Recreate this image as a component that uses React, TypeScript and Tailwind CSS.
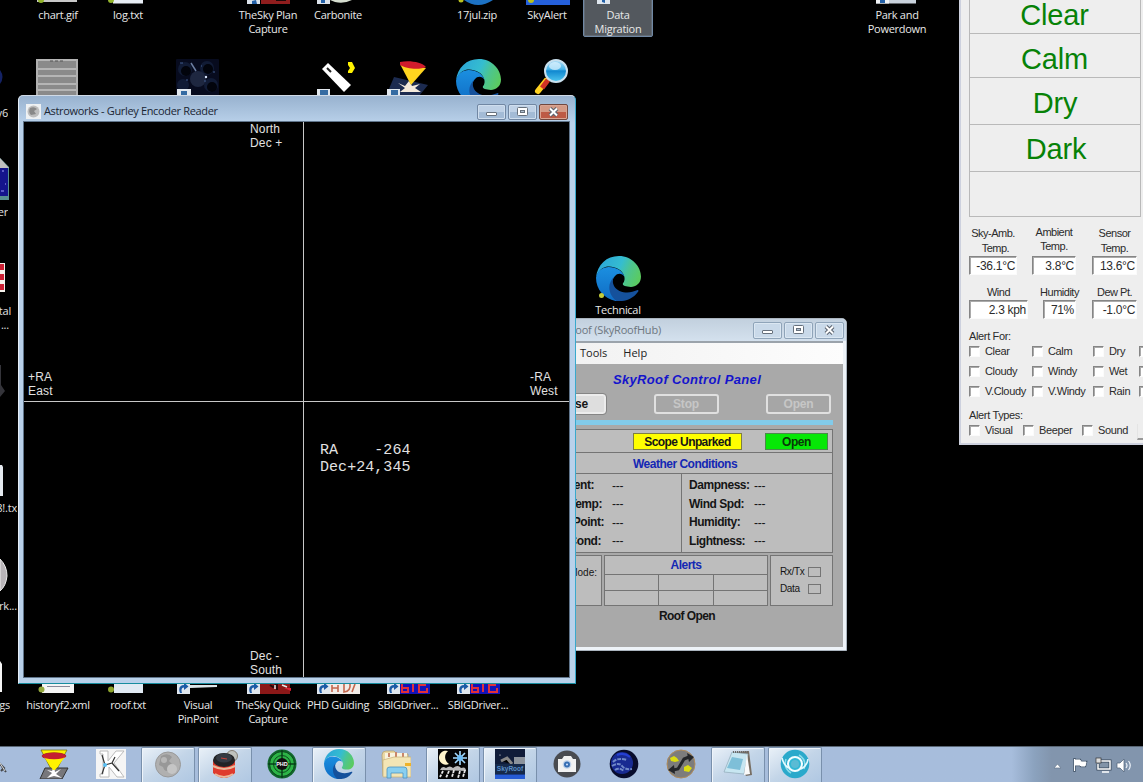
import React from "react";

const segoe = "font-['Open_Sans','Noto_Sans',sans-serif]";
const arial = "font-['Liberation_Sans',Arial,sans-serif]";

function Edge({ size, id }: { size: number; id: string }) {
  return (
    <svg width={size} height={size} viewBox="0 0 134 134">
      <defs>
        <linearGradient id={id + "a"} x1="0" x2="1" y1="0.3" y2="0.6">
          <stop offset="0" stopColor="#2ba5d8" />
          <stop offset="0.5" stopColor="#35bdd0" />
          <stop offset="0.72" stopColor="#4cc590" />
          <stop offset="1" stopColor="#5bcb60" />
        </linearGradient>
        <linearGradient id={id + "b"} x1="0" x2="0" y1="0" y2="1">
          <stop offset="0" stopColor="#1b8fe0" />
          <stop offset="1" stopColor="#0f6cc4" />
        </linearGradient>
      </defs>
      <path fill={`url(#${id}a)`} d="M0 65C4 25 32 0 68 0C108 0 134 32 134 62C134 82 118 92 104 92C90 92 78 88 80 82C86 74 86 66 84 60C78 38 50 28 30 32C14 36 4 50 0 65Z" />
      <path fill={`url(#${id}b)`} d="M0 65C4 44 20 33 38 33C62 33 80 46 85 62C78 50 64 50 56 60C40 76 50 110 78 124C76 134 60 134 58 134C25 128 0 100 0 65Z" />
      <path fill="#15519c" d="M56 60C44 70 50 96 70 104C90 112 108 108 122 102C127 100 128 104 124 108C108 130 84 136 62 134C40 120 28 84 56 60Z" />
    </svg>
  );
}

function Shortcut({ className = "" }: { className?: string }) {
  return (
    <svg className={className} width="13" height="13" viewBox="0 0 13 13">
      <rect width="13" height="13" fill="#dfe6ee" />
      <path d="M3 12C1 7 3 4 7 4V1.500L11.500 5.500L7 9V6.500C4.500 6.500 4 9 5 12Z" fill="#1c5aa6" />
    </svg>
  );
}

function Label({ className, children }: { className: string; children: React.ReactNode }) {
  return (
    <div className={`absolute w-[90px] text-center text-[11px] leading-[14px] tracking-[-0.28px] whitespace-pre text-[#e8e8e8] ${segoe} ${className}`}>
      {children}
    </div>
  );
}

function CutLabel({ className, children }: { className: string; children: React.ReactNode }) {
  return (
    <div className={`absolute left-0 flex justify-end overflow-hidden text-[11px] leading-[14px] tracking-[-0.2px] whitespace-pre text-[#e0e0e0] ${segoe} ${className}`}>
      <span>{children}</span>
    </div>
  );
}

function DesktopIcons() {
  return (
    <>
      <svg className="absolute left-0 top-0" width="950" height="12" viewBox="0 0 950 12">
        <rect x="37" width="40" height="2" fill="#c8c8c8" /><circle cx="41" cy="0" r="3" fill="#93b52c" />
        <rect x="113" width="30" height="3.500" fill="#e8eef5" /><circle cx="111" cy="0" r="3" fill="#93b52c" />
        <rect x="247" width="13" height="4" fill="#dbe2ea" /><path d="M252 4V1L256 0L257 4Z" fill="#2461a8" />
        <rect x="261" width="29" height="4" fill="#8f1d1d" /><path d="M276 0H286V1H276Z" fill="#1c0808" />
        <rect x="317" width="13" height="4" fill="#dbe2ea" /><path d="M321 3V0H325V3Z" fill="#2461a8" />
        <path d="M330 0H352Q344 4 335 2Z" fill="#d5ddcf" />
        <path d="M464 0H493Q478 10 464 0Z" fill="#1d72c4" /><circle cx="461" cy="0" r="2.500" fill="#b9c11f" />
        <rect x="526" width="44" height="5" fill="#2560dc" /><circle cx="531" cy="0" r="3" fill="#b9c11f" />
        <rect x="876" width="40" height="3.500" fill="#c9d2dc" /><rect x="876" width="13" height="3.500" fill="#f0f3f6" /><path d="M880 3V0H885V3Z" fill="#2461a8" />
      </svg>
      <Label className="left-[13px] top-[8px]">chart.gif</Label>
      <Label className="left-[83px] top-[8px]">log.txt</Label>
      <Label className="left-[223px] top-[8px]">{"TheSky Plan\nCapture"}</Label>
      <Label className="left-[293px] top-[8px]">Carbonite</Label>
      <Label className="left-[432px] top-[8px]">17jul.zip</Label>
      <Label className="left-[502px] top-[8px]">SkyAlert</Label>
      <div className="absolute left-[583px] top-[-4px] h-[41px] w-[70px] rounded-[2px] border border-[#7088a4] bg-[#53585e] shadow-[inset_0_0_0_1px_#626a73]" />
      <svg className="absolute left-[597px] top-0" width="13" height="4"><rect width="13" height="4" fill="#dfe6ee" /><path d="M5 2V0H8V3Z" fill="#2461a8" /></svg>
      <Label className="left-[573px] top-[8px]">{"Data\nMigration"}</Label>
      <Label className="left-[852px] top-[8px]">{"Park and\nPowerdown"}</Label>

      <svg className="absolute left-[36px] top-[59px]" width="42" height="37" viewBox="0 0 42 37">
        <rect width="42" height="37" fill="#8a8a8a" />
        <path d="M0 1H42M0 10H42M0 17H42M0 25H42M0 31H42" stroke="#c4c4c4" strokeWidth="1.300" />
        <path d="M1 0V37M41 0V37" stroke="#b0b0b0" strokeWidth="2" />
        <path d="M14 2H27" stroke="#555" strokeDasharray="3 2" />
      </svg>
      <svg className="absolute left-[176px] top-[59px]" width="43" height="37" viewBox="0 0 43 37">
        <rect width="43" height="37" rx="1" fill="#070b1e" />
        <g fill="#111b35"><circle cx="9" cy="10" r="7" /><circle cx="31" cy="9" r="7" /><circle cx="7" cy="26" r="6" /><circle cx="35" cy="26" r="7" /></g>
        <g fill="#02040c"><circle cx="10" cy="12" r="5" /><circle cx="32" cy="10" r="5" /><circle cx="36" cy="28" r="5" /></g>
        <circle cx="22" cy="20" r="8" fill="#1e2740" />
        <path d="M15 4L20 12" stroke="#6c7fa2" strokeWidth="1.500" />
        <circle cx="30" cy="18" r="1.200" fill="#dce8ff" />
        <path d="M4 4H7M25 7H26M37 13H39M10 21H12M28 22H30" stroke="#425f91" />
        <rect x="1" y="30" width="14" height="7" fill="#e2e8ee" /><rect x="5" y="32" width="6" height="5" fill="#356ba2" />
      </svg>
      <svg className="absolute left-[316px] top-[59px]" width="42" height="37" viewBox="0 0 42 37">
        <path d="M6 10L12 4L35 26L28 33Z" fill="#fff" /><path d="M11 9L15 13" stroke="#222" strokeWidth="2" />
        <path d="M32 3H36L38 7L39 9L36 14H32V12L34 9L32 6Z" fill="#fff200" />
        <rect x="1" y="30" width="13" height="7" fill="#e2e8ee" /><rect x="4" y="31" width="8" height="5" fill="#356ba2" />
      </svg>
      <svg className="absolute left-[386px] top-[59px]" width="42" height="37" viewBox="0 0 42 37">
        <path d="M8 18L42 26L33 37H0Z" fill="#1c2b50" />
        <path d="M12 24L19 27L23 22L26 27L34 25L29 29L35 33H14L19 29Z" fill="#f4eadc" />
        <path d="M14 5L40 9L25 26Z" fill="#ffd51f" />
        <path d="M14 3C23 1 36 3 40 8C34 11 20 10 14 6Z" fill="#d11c2c" />
        <rect x="1" y="30" width="13" height="7" fill="#e2e8ee" /><rect x="5" y="31" width="7" height="5" fill="#356ba2" />
      </svg>
      <div className="absolute left-[456px] top-[59px]"><Edge size={45} id="d1" /></div>
      <svg className="absolute left-[532px] top-[58px]" width="40" height="38" viewBox="0 0 40 38">
        <defs><linearGradient id="lens" x2="0" y2="1"><stop stopColor="#b0e0f8" /><stop offset=".42" stopColor="#49b4e8" /><stop offset=".5" stopColor="#1188d0" /><stop offset="1" stopColor="#50c8f0" /></linearGradient></defs>
        <path d="M14 23L6 33" stroke="#ffd220" strokeWidth="6" strokeLinecap="round" /><path d="M16 22L10 30" stroke="#cf3326" strokeWidth="5" />
        <circle cx="24" cy="13" r="11" fill="url(#lens)" stroke="#c9e0ee" strokeWidth="2" />
        <ellipse cx="23" cy="8" rx="6" ry="4" fill="#dff4ff" opacity=".7" />
      </svg>
      <div className="absolute left-[596px] top-[256px]"><Edge size={45} id="d2" /></div>
      <div className="absolute left-[599px] top-[293px] size-[5px] rounded-full bg-[#c2cc3c]" />
      <Label className="left-[573px] top-[303px]">Technical</Label>

      <svg className="absolute left-0 top-[60px]" width="14" height="640" viewBox="0 60 14 640">
        <path d="M0 70Q5 77 0 84Z" fill="#142264" />
        <path d="M0 158L9 167V200H0Z" fill="#579090" /><path d="M0 168H8V196H0Z" fill="#14148c" /><path d="M0 158L9 168H0Z" fill="#c0c0c0" />
        <path d="M2 171H4M5 184H6M1 191H4" stroke="#a0a0ff" />
        <rect y="263" width="5" height="29" fill="#f5f2ec" /><path d="M0 264H4V270H0ZM0 274H4V280H0ZM0 284H4V290H0Z" fill="#cc2034" />
        <path d="M0 365L1 365V385L5 391L0 397Z" fill="#34343a" />
        <path d="M0 465H2L3 467V496H0Z" fill="#e4e9ef" />
        <path d="M0 559Q7 566 7 576Q6 586 0 591Z" fill="#b8b4b8" stroke="#eee" />
        <path d="M0 661L2 664V692H0Z" fill="#f5f5f5" />
      </svg>
      <CutLabel className="top-[106px] w-[8px]">y6</CutLabel>
      <CutLabel className="top-[205px] w-[8px]">er</CutLabel>
      <CutLabel className="top-[304px] w-[11px]">tal</CutLabel>
      <CutLabel className="top-[318px] w-[9px]">...</CutLabel>
      <CutLabel className="top-[501px] w-[17px]">8!.tx</CutLabel>
      <CutLabel className="top-[599px] w-[17px]">rk...</CutLabel>
      <CutLabel className="top-[698px] w-[10px]">gs</CutLabel>

      <svg className="absolute left-0 top-[682px]" width="520" height="13" viewBox="0 682 520 13">
        <rect x="42" y="684" width="32" height="9" fill="#f4f4f4" /><path d="M47 686.500H70" stroke="#889" /><circle cx="41.500" cy="689.500" r="3" fill="#93a83c" />
        <rect x="114" y="684" width="29" height="9" fill="#e1eaf3" /><circle cx="111" cy="689.500" r="3" fill="#8ca42c" />
        <path d="M190 685H217V687L190 688Z" fill="#dde6ea" />
        <rect x="260" y="684" width="30" height="10" fill="#8c1818" /><path d="M270 685L273 687L277 684V690" fill="none" stroke="#2a0a0a" strokeWidth="2" /><path d="M275 685V689M287 687L282 685" stroke="#e8e8e8" strokeWidth="1.500" /><path d="M284 688H291V691Z" fill="#e11f35" />
        <rect x="329" y="684" width="31" height="10" fill="#f2ece8" /><path d="M332 685V692M338 685V692M332 688H338M344 684V692Q351 691 350 684M355 684L352 692" stroke="#c3674e" strokeWidth="1.600" fill="none" />
        {[400, 470].map((x) => (
          <g key={x}>
            <rect x={x} y="684" width="30" height="10" fill="#1512b8" />
            <path d={`M${x + 2} 684V692H${x + 8}V688H${x + 2}M${x + 13} 684V692M${x + 26} 685H${x + 19}V692H${x + 27}V688`} fill="none" stroke="#e0303a" strokeWidth="2" />
          </g>
        ))}
      </svg>
      <div className="absolute left-[176px] top-[684px] h-[10px] w-[314px] overflow-hidden">
        <Shortcut className="absolute left-px top-[-3px]" />
        <Shortcut className="absolute left-[71px] top-[-3px]" />
        <Shortcut className="absolute left-[141px] top-[-3px]" />
        <Shortcut className="absolute left-[211px] top-[-3px]" />
        <Shortcut className="absolute left-[281px] top-[-3px]" />
      </div>
      <Label className="left-[13px] top-[698px]">historyf2.xml</Label>
      <Label className="left-[83px] top-[698px]">roof.txt</Label>
      <Label className="left-[153px] top-[698px]">{"Visual\nPinPoint"}</Label>
      <Label className="left-[223px] top-[698px]">{"TheSky Quick\nCapture"}</Label>
      <Label className="left-[293px] top-[698px]">PHD Guiding</Label>
      <Label className="left-[363px] top-[698px]">SBIGDriver...</Label>
      <Label className="left-[433px] top-[698px]">SBIGDriver...</Label>
    </>
  );
}

function Glyph({ kind }: { kind: "min" | "max" | "close" }) {
  return (
    <svg width="13" height="10" viewBox="0 0 13 10">
      {kind === "min" && <rect x="1.500" y="5.500" width="10" height="3" rx=".5" fill="#fff" stroke="#66707c" />}
      {kind === "max" && <><rect x="1.500" y=".5" width="10" height="8" rx="1" fill="#fff" stroke="#66707c" /><rect x="4.500" y="3.500" width="4" height="2" fill="#aebfd0" stroke="#66707c" /></>}
      {kind === "close" && <><path d="M3 1.500L10 8.500M10 1.500L3 8.500" stroke="#59626e" strokeWidth="4" /><path d="M3 1.500L10 8.500M10 1.500L3 8.500" stroke="#fff" strokeWidth="2" /></>}
    </svg>
  );
}

function EncoderWindow() {
  const cap = "flex h-[16px] w-[29px] items-center justify-center rounded-[2px] border";
  const blue = "border-[#7187a3] bg-linear-to-b from-[#bfd1e6] from-50% to-[#a3bbd6] to-50% shadow-[inset_0_0_0_1px_#cfdeee]";
  return (
    <section className="absolute left-[18px] top-[95px] z-20 flex h-[589px] w-[558px] flex-col rounded-t-[5px] border border-t-[#d0dae6] border-r-[#39a9cc] border-b-[#178d9f] border-l-[#e6eef7] bg-[#b9d1ea] bg-linear-to-b from-[#98b2cf] to-[#b9d1ea] to-[27px] pr-[5px] pb-[5px] pl-[4px]">
      <header className="flex h-[25px] shrink-0 items-center pt-[6px]">
        <div className="ml-[3px] flex size-[15px] items-center justify-center bg-[#eef1f3]">
          <svg width="13" height="13" viewBox="0 0 13 13"><circle cx="6.500" cy="6.500" r="6" fill="#bdbdbd" /><path d="M3 3Q7 1 10 4L7 6L9 9L4 10Q1 7 3 3" fill="#888" /></svg>
        </div>
        <h1 className={`ml-[3px] text-[11px] tracking-[-0.34px] whitespace-nowrap text-[#1a2533] ${segoe}`}>Astroworks - Gurley Encoder Reader</h1>
        <div className="mr-[2px] ml-auto flex gap-[2px]">
          <div className={`${cap} ${blue}`}><Glyph kind="min" /></div>
          <div className={`${cap} ${blue}`}><Glyph kind="max" /></div>
          <div className={`${cap} border-[#71483f] bg-linear-to-b from-[#d39a86] from-50% to-[#bd5a45] to-50% shadow-[inset_0_0_0_1px_#d9a492]`}><Glyph kind="close" /></div>
        </div>
      </header>
      <div className={`grid min-h-0 flex-1 grid-cols-[280px_1fr] grid-rows-[280px_1fr] border border-[#60758b] bg-black text-[12px] leading-[14px] tracking-[0.15px] text-[#e2e2e2] ${arial}`}>
        <div className="flex flex-col justify-between border-r border-b border-[#c8c8c8]">
          <p className="w-[53px] self-end">North<br />Dec +</p>
          <p className="ml-[4px] pb-[3px]">+RA<br />East</p>
        </div>
        <div className="flex items-end justify-end border-b border-[#c8c8c8] pb-[3px]">
          <p className="w-[39px]">-RA<br />West</p>
        </div>
        <div className="flex items-end justify-end border-r border-[#c8c8c8]">
          <p className="w-[53px]">Dec -<br />South</p>
        </div>
        <pre className="pt-[40px] pl-[16px] font-['Liberation_Mono',monospace] text-[15px] leading-[17px] tracking-[0.05px]">{"RA    -264\nDec+24,345"}</pre>
      </div>
    </section>
  );
}

function Reading({ name, value, className }: { name: string; value: string; className: string }) {
  return (
    <div className="flex h-[18.500px] items-center">
      <span className={className}>{name}</span>
      <span className="pt-px text-[12px] font-normal tracking-[-0.2px]">{value}</span>
    </div>
  );
}

function RoofWindow() {
  const cap = "flex h-[17px] w-[29px] items-center justify-center rounded-[2px] border border-[#8fa4b9] bg-[#c9d9e9] shadow-[inset_0_0_0_1px_#dbe7f2]";
  const btn = "flex h-[20px] items-center justify-center rounded-[3px] border-2 text-[12px] tracking-[-0.2px]";
  return (
    <section className="absolute left-[531px] top-[318px] z-10 flex h-[333px] w-[316px] flex-col rounded-t-[5px] border border-[#aab4be] bg-[#eef3f8] px-[3px] pb-[3px]">
      <header className="-mx-[3px] flex h-[22px] shrink-0 items-center rounded-t-[4px] bg-linear-to-b from-[#c2d0de] to-[#d4e1ee]">
        <h2 className={`w-[129px] text-right text-[11px] tracking-[-0.2px] whitespace-nowrap text-[#6c7680] ${segoe}`}>SkyRoof (SkyRoofHub)</h2>
        <div className="mr-[2px] ml-auto flex gap-[2px]">
          <div className={cap}><Glyph kind="min" /></div>
          <div className={cap}><Glyph kind="max" /></div>
          <div className={cap}><Glyph kind="close" /></div>
        </div>
      </header>
      <nav className={`flex h-[23px] shrink-0 items-center gap-[16px] border-t-2 border-[#9ba3ab] bg-linear-to-r from-[#f0f0f0] to-[#fdfdfd] pl-[45px] text-[11px] text-[#222] ${segoe}`}>
        <span>Tools</span><span>Help</span>
      </nav>
      <div className={`flex flex-1 flex-col bg-[#a9a9a9] pr-[10px] pl-[6px] font-bold text-[#151515] ${arial}`}>
        <h3 className="mt-[7px] h-[17px] text-center text-[13px] leading-[17px] tracking-[0.35px] text-[#1414cc] italic">SkyRoof Control Panel</h3>
        <div className="mt-[6px] flex justify-between pr-[2px]">
          <div className={`${btn} w-[65px] justify-end border-[#ececec] bg-[#dedede] pr-[16px] outline outline-[#858585]`}>Close</div>
          <div className={`${btn} w-[65px] border-[#e0e0e0] bg-[#a6a6a6] text-[#c6c6c6]`}>Stop</div>
          <div className={`${btn} w-[65px] border-[#e0e0e0] bg-[#a6a6a6] text-[#c6c6c6]`}>Open</div>
        </div>
        <div className="mt-[6px] h-[5px] bg-[#82cbea]" />
        <div className="mt-[4px] border border-[#747474] bg-[#bdbdbd] text-[12px] tracking-[-0.6px]">
          <div className="flex h-[23px] items-center justify-end gap-[23px] border-b border-[#747474] pt-px pr-[4px]">
            <div className="flex h-[17px] w-[109px] items-center justify-center border border-[#7f7f40] bg-[#ffff00]">Scope Unparked</div>
            <div className="flex h-[17px] w-[63px] items-center justify-center border border-[#4a8a4a] bg-[#06e806] tracking-[-0.4px] text-[#083808]">Open</div>
          </div>
          <div className="flex h-[21px] items-center justify-center border-b border-[#747474] pt-px pr-[4px] tracking-[-0.5px] text-[#1428b4]">Weather Conditions</div>
          <div className="flex h-[78px] tracking-[-0.45px]">
            <div className="w-[140px] border-r border-[#747474] pt-[2px]">
              <Reading className="mr-[18px] w-[52px] text-right" name="Ambient:" value="---" />
              <Reading className="mr-[10px] w-[60px] text-right" name="Sky Temp:" value="---" />
              <Reading className="mr-[8px] w-[62px] text-right" name="Dew Point:" value="---" />
              <Reading className="mr-[11px] w-[59px] text-right" name="Sky Cond:" value="---" />
            </div>
            <div className="pt-[2px] pl-[7px]">
              <Reading className="w-[65px]" name="Dampness:" value="---" />
              <Reading className="w-[65px]" name="Wind Spd:" value="---" />
              <Reading className="w-[65px]" name="Humidity:" value="---" />
              <Reading className="w-[65px]" name="Lightness:" value="---" />
            </div>
          </div>
        </div>
        <div className="mt-[2px] flex h-[51px] gap-[2px] text-[10px] font-normal">
          <div className="w-[61px] border border-[#747474] bg-[#bdbdbd] pt-[9px] pr-[4px] text-right">Mode:</div>
          <div className="flex flex-1 flex-col border border-[#747474] bg-[#bdbdbd]">
            <div className="h-[18px] text-center text-[12px] leading-[19px] font-bold tracking-[-0.5px] text-[#1428b4]">Alerts</div>
            <div className="grid flex-1 grid-cols-3 grid-rows-2 gap-px bg-[#747474] pt-px">
              {[0, 1, 2, 3, 4, 5].map((n) => <div key={n} className="bg-[#bdbdbd]" />)}
            </div>
          </div>
          <div className="flex w-[63px] flex-col gap-[5px] border border-[#747474] bg-[#bdbdbd] pt-[10px] pr-[11px] pl-[9px] text-[10px] leading-[12px] tracking-[-0.35px]">
            <div className="flex items-center justify-between">Rx/Tx<i className="h-[10px] w-[13px] border border-[#747474]" /></div>
            <div className="flex items-center justify-between">Data<i className="h-[10px] w-[13px] border border-[#747474]" /></div>
          </div>
        </div>
        <p className="mt-[2px] text-center text-[12px] leading-[16px] tracking-[-0.6px]">Roof Open</p>
      </div>
    </section>
  );
}

const sunken = "border border-t-[#858585] border-l-[#858585] border-r-[#fbfbfb] border-b-[#fbfbfb] shadow-[inset_1px_1px_0_#aaa] bg-white";

function Field({ label, value, className, lift = false }: { label: string; value: string; className: string; lift?: boolean }) {
  return (
    <div className="flex flex-col justify-end whitespace-pre">
      <span className={`self-center text-center tracking-[-0.5px] ${lift ? "leading-[14px] pb-[3px]" : "leading-[15px]"}`}>{label}</span>
      <span className={`flex h-[19px] items-center justify-end pr-px text-[12px] tracking-[-0.3px] ${sunken} ${className}`}>{value}</span>
    </div>
  );
}

function Check({ label, className = "" }: { label: string; className?: string }) {
  return (
    <div className={`flex shrink-0 items-center gap-[5px] overflow-visible whitespace-nowrap ${className}`}>
      <i className={`size-[11px] shrink-0 ${sunken}`} />{label}
    </div>
  );
}

function WeatherWindow() {
  const rows = [["Clear", "Calm", "Dry"], ["Cloudy", "Windy", "Wet"], ["V.Cloudy", "V.Windy", "Rain"]];
  return (
    <section className={`absolute left-[959px] top-0 h-[445px] w-[184px] overflow-hidden border-b-2 border-l-2 border-[#cdd1de] bg-[#eeeeee] pl-[8px] text-[11px] tracking-[-0.35px] text-[#2b2b2b] ${arial}`}>
      <div className="flex h-[217px] w-[172px] flex-col border-x border-b border-[#b9b9b9] text-center text-[29px] tracking-[-0.2px] text-[#078207]">
        <div className="h-[34px] border-b border-[#b9b9b9] pr-px leading-[31px]">Clear</div>
        <div className="h-[44px] border-b border-[#b9b9b9] pr-px leading-[50px]">Calm</div>
        <div className="h-[47px] border-b border-[#b9b9b9] leading-[51px]">Dry</div>
        <div className="h-[47px] border-b border-[#b9b9b9] pl-[2px] leading-[49px]">Dark</div>
      </div>
      <div className="flex h-[58px] items-end">
        <div className="w-[63px]"><div className="w-[48px]"><Field label={"Sky-Amb.\n  Temp."} value="-36.1°C" className="w-[48px]" /></div></div>
        <div className="w-[60px]"><div className="w-[44px]"><Field lift label={"Ambient\nTemp."} value="3.8°C" className="w-[44px]" /></div></div>
        <div className="w-[45px]"><Field label={"Sensor\nTemp."} value="13.6°C" className="w-[45px]" /></div>
      </div>
      <div className="flex h-[44px] items-end">
        <div className="mr-[15px] w-[59px]"><Field label="Wind" value="2.3 kph" className="w-[59px]" /></div>
        <div className="mr-[16px] flex w-[33px] justify-center"><Field label="Humidity" value="71%" className="w-[33px] self-center" /></div>
        <div className="w-[45px]"><Field label="Dew Pt." value="-1.0°C" className="w-[45px]" /></div>
      </div>
      <p className="mt-[10px] leading-[14px]">Alert For:</p>
      <div className="-mt-[2px] flex flex-col">
        {rows.map((row) => (
          <div key={row[0]} className="flex h-[20px] items-center">
            <Check label={row[0]} className="w-[63px]" />
            <Check label={row[1]} className="w-[61px]" />
            <Check label={row[2]} className="w-[46px]" />
            <i className={`size-[11px] shrink-0 ${sunken}`} />
          </div>
        ))}
      </div>
      <p className="mt-[7px] leading-[14px]">Alert Types:</p>
      <div className="flex h-[16px] items-center">
        <Check label="Visual" className="w-[54px]" />
        <Check label="Beeper" className="w-[59px]" />
        <Check label="Sound" className="w-[55px]" />
        <i className="mt-[4px] h-[16px] w-[12px] shrink-0 border-b-2 border-l border-b-[#999] border-l-[#e4e4e4] bg-[#eee]" />
      </div>
    </section>
  );
}

const taskIcons: { active: boolean; art: React.ReactNode }[] = [
  { active: false, art: <><path d="M2 1H28L17 22H13Z" fill="#fff200" stroke="#6a6408" strokeWidth=".7" /><ellipse cx="15" cy="7" rx="12" ry="3.200" fill="#c51f30" stroke="#711" strokeWidth=".6" /><path d="M6 19H29L23 30H1Z" fill="#77777b" stroke="#333" /><path d="M15 17L16 23L22 20L17 25L23 29L15 27L8 29L13 24L8 21L13 22Z" fill="#fff" /><path d="M5 8L26 8L16 21H14Z" fill="#fff200" /><ellipse cx="15" cy="7" rx="12" ry="3.200" fill="#c51f30" /></> },
  { active: false, art: <><rect width="30" height="30" fill="#f5f5f5" /><path d="M4 2H12V12L20 2H28L18 14L28 28H21L13 18V28H4V25H7V5H4Z" fill="#fff" stroke="#bbb" /><path d="M6 6L9 16L6 25M9 16L16 14L19 8M16 14L23 22" fill="none" stroke="#333" strokeWidth="1.200" /><circle cx="9" cy="16" r="2" fill="#59bff2" /></> },
  { active: true, art: <><circle cx="15" cy="15.500" r="12.500" fill="#b0b0b0" stroke="#999" /><path d="M8 7Q15 3 19 8L16 12L20 16L16 21Q12 24 10 18L6 16Z" fill="#989898" /><circle cx="19" cy="20" r="5" fill="#c5c5c5" /><circle cx="11" cy="11" r="3" fill="#b7b7b7" /></> },
  { active: true, art: <><circle cx="22" cy="7" r="5.500" fill="#bfc2bd" stroke="#867f74" /><path d="M3 11V24Q14 34 25 24V11Z" fill="#df3b2d" /><path d="M3 17Q14 23 25 17M5 25Q14 31 23 25" stroke="#e9b99b" strokeWidth="2" fill="none" /><ellipse cx="14" cy="11" rx="11" ry="7" fill="#232426" /><ellipse cx="14" cy="9" rx="8" ry="4.500" fill="#353b44" /><path d="M11 9L17 10" stroke="#c9423a" /></> },
  { active: false, art: <><circle cx="15" cy="15" r="14.500" fill="#11682c" /><circle cx="15" cy="15" r="12.500" fill="#2db447" stroke="#0a441a" /><circle cx="15" cy="15" r="8.500" fill="none" stroke="#0a4f1b" /><path d="M15 1V29M1 15H29" stroke="#07401a" strokeWidth="1.500" /><circle cx="15" cy="15" r="6" fill="#101010" /><text x="15" y="17" textAnchor="middle" fontSize="5.500" fontWeight="bold" fill="#fff" fontFamily="Liberation Sans">PHD</text></> },
  { active: true, art: <foreignObject width="30" height="30"><Edge size={30} id="t" /></foreignObject> },
  { active: false, art: <><path d="M1 6Q1 2 5 2H13L16 5H27V27H2Z" fill="#ead8a3" stroke="#b29c68" strokeWidth=".7" /><path d="M4 4H26V12H4Z" fill="#f8f3df" /><path d="M8 4V8M15 3V9M22 4V10" stroke="#c9866a" strokeWidth="2" /><path d="M2 11L13 8H30V28H2Z" fill="#f3e5b5" stroke="#c5af76" strokeWidth=".7" /><path d="M24 14H30V17H24Z" fill="#efb329" /><path d="M6 29V20Q6 18 9 18H23Q26 18 26 21V29H22V24H10V29Z" fill="#89cff0" stroke="#4992c0" strokeWidth=".8" /></> },
  { active: true, art: <><rect width="30" height="30" fill="#050505" /><path d="M10 2A7 7 0 1 0 11 15A8 8 0 0 1 10 2Z" fill="#fff5cb" /><path d="M22 2V16M15 9H29M17 4L27 14M27 4L17 14" stroke="#a6dbff" strokeWidth="1.600" /><circle cx="22" cy="9" r="3" fill="#6cbcf4" /><path d="M2 21Q4 16 8 19Q12 16 15 19Q20 15 23 19Q28 17 28 22Z" fill="#bbb" /><path d="M5 22L2 28M11 22L8 29M16 21L14 28M22 22L20 29M27 21L25 28" stroke="#e8e8e8" strokeWidth="1.800" strokeDasharray="3 1" /></> },
  { active: true, art: <><rect width="30" height="30" fill="#101c39" /><path d="M6 12L12 9L17 15" stroke="#888" strokeWidth="3" /><rect x="19" y="8" width="11" height="7" fill="#8c939c" /><path d="M0 15H30V25H0Z" fill="#15294a" /><text x="15" y="22" textAnchor="middle" fontSize="6.500" fontWeight="bold" fill="#5b8fc8" fontFamily="Liberation Sans">SkyRoof</text><rect y="25.500" width="30" height="4.500" fill="#265bd4" /><circle cx="5" cy="6" r=".6" fill="#fff" /></> },
  { active: false, art: <><circle cx="15" cy="15" r="13.500" fill="#494b50" /><path d="M7 10H10L12 7H19L21 10H24V23H6V10Z" fill="#f1f1f1" /><circle cx="15" cy="15.500" r="4.300" fill="#bfd1e9" /><circle cx="15" cy="15.500" r="3" fill="#376eb3" /><circle cx="15" cy="15.500" r="1" fill="#d8e6ff" /></> },
  { active: false, art: <><circle cx="15" cy="15" r="14.300" fill="#080c2c" /><circle cx="13" cy="14" r="11" fill="#182a91" /><path d="M4 13Q9 8 18 11M3 17Q10 13 13 17T23 20M6 21Q10 18 15 22" fill="none" stroke="#7089c8" strokeWidth="2" strokeDasharray="4 1" /><path d="M8 6Q15 3 21 8" stroke="#253fd2" strokeWidth="2" fill="none" /></> },
  { active: false, art: <><circle cx="15" cy="15" r="14" fill="#7c7c7c" stroke="#b08b5a" /><path d="M7 21L12 20L18 10L23 8" fill="none" stroke="#242629" strokeWidth="3" /><path d="M21 4L28 8L23 13ZM9 25L2 21L8 16Z" fill="#242629" /><path d="M4 9L8 7L11 9L13 12L9 13L5 12ZM18 18L22 16L26 19L23 23L18 22Z" fill="#dbdc12" /></> },
  { active: true, art: <><path d="M10 3L26 2L29 26L23 27Z" fill="#776e63" /><path d="M9 3L25 5L21 25L1 23Z" fill="#c7e6f1" stroke="#8faab8" strokeWidth=".7" /><path d="M9 8L20 10L17 21L4 19Z" fill="#7ebfd8" /><path d="M24 5L27 25L21 26Z" fill="#fafafa" /><path d="M10 3H26" stroke="#686868" strokeWidth="2" strokeDasharray="1 1" /></> },
  { active: true, art: <><circle cx="15" cy="15" r="14.300" fill="#2ba9cb" /><path d="M6 10Q3 19 11 24M24 20Q27 11 19 6" stroke="#8cdbe9" strokeWidth="1.500" fill="none" /><circle cx="15" cy="15" r="7" fill="#32b7d4" stroke="#f2fdff" strokeWidth="2" /><path d="M2 9Q4 17 9 19M28 10Q27 17 21 20" stroke="#e5fbff" strokeWidth="1.600" fill="none" /><circle cx="15" cy="15" r="4" fill="#5bbbd4" /></> },
];

function Taskbar() {
  return (
    <footer className="absolute bottom-0 left-0 flex h-[36px] w-full items-start gap-[3px] overflow-hidden border-t border-[#596674] bg-[#a7bddc] bg-linear-to-r from-[#a7bddc] from-[88.5%] via-[#8ba2be] via-[90.5%] to-[#8295ad] to-[92%]">
      <svg className="w-[24px] shrink-0" height="35" viewBox="0 0 24 35"><path d="M-2 15L4 21L1 24M2 20L6 25" fill="none" stroke="#44474b" strokeWidth="2" /><path d="M0 16L5 24" stroke="#ddd" /></svg>
      {taskIcons.map((item, i) => (
        <div key={i} className={`flex h-[36px] w-[54px] shrink-0 justify-center rounded-t-[2px] border border-b-0 pt-px ${item.active ? "border-[#7990ac] bg-linear-to-br from-[#eaf1f8] via-[#c3d5e8] to-[#afc7e2] shadow-[inset_1px_1px_0_#eef4fa]" : "border-transparent"}`}>
          <svg width="30" height="30" viewBox="0 0 30 30">{item.art}</svg>
        </div>
      ))}
      <svg className="mt-[9px] mr-[11px] ml-auto" width="79" height="20" viewBox="0 0 79 20">
        <path d="M1 12L4.500 8L8 12Z" fill="#fff" stroke="#65778d" strokeWidth=".7" />
        <path d="M21.500 2V16M22 4H27L28 6H33L32 10H28L27 9H22Z" stroke="#4b5c70" strokeWidth="2.500" fill="#4b5c70" /><path d="M21.500 3V15M22 4H27L28 6H33L32 10H28L27 9H22Z" stroke="#fff" fill="#fff" />
        <path d="M47 5H57V13H45V8" fill="#8294a8" stroke="#39495b" strokeWidth="3" /><path d="M47 5H57V13H45V8M49 16H56" fill="none" stroke="#fff" strokeWidth="1.500" /><rect x="43" y="2" width="5" height="5" fill="#ddd" stroke="#333" strokeWidth=".7" />
        <path d="M64 7H67L71 3V16L67 12H64Z" fill="#fff" stroke="#4e6075" strokeWidth=".7" /><path d="M73 7Q75 9.500 73 12M75.500 5Q79 9.500 75.500 14" fill="none" stroke="#edf3fa" strokeWidth="1.200" />
      </svg>
    </footer>
  );
}

export default function App() {
  return (
    <main className="relative h-[782px] w-[1143px] overflow-hidden bg-black">
      <DesktopIcons />
      <RoofWindow />
      <EncoderWindow />
      <WeatherWindow />
      <Taskbar />
    </main>
  );
}
